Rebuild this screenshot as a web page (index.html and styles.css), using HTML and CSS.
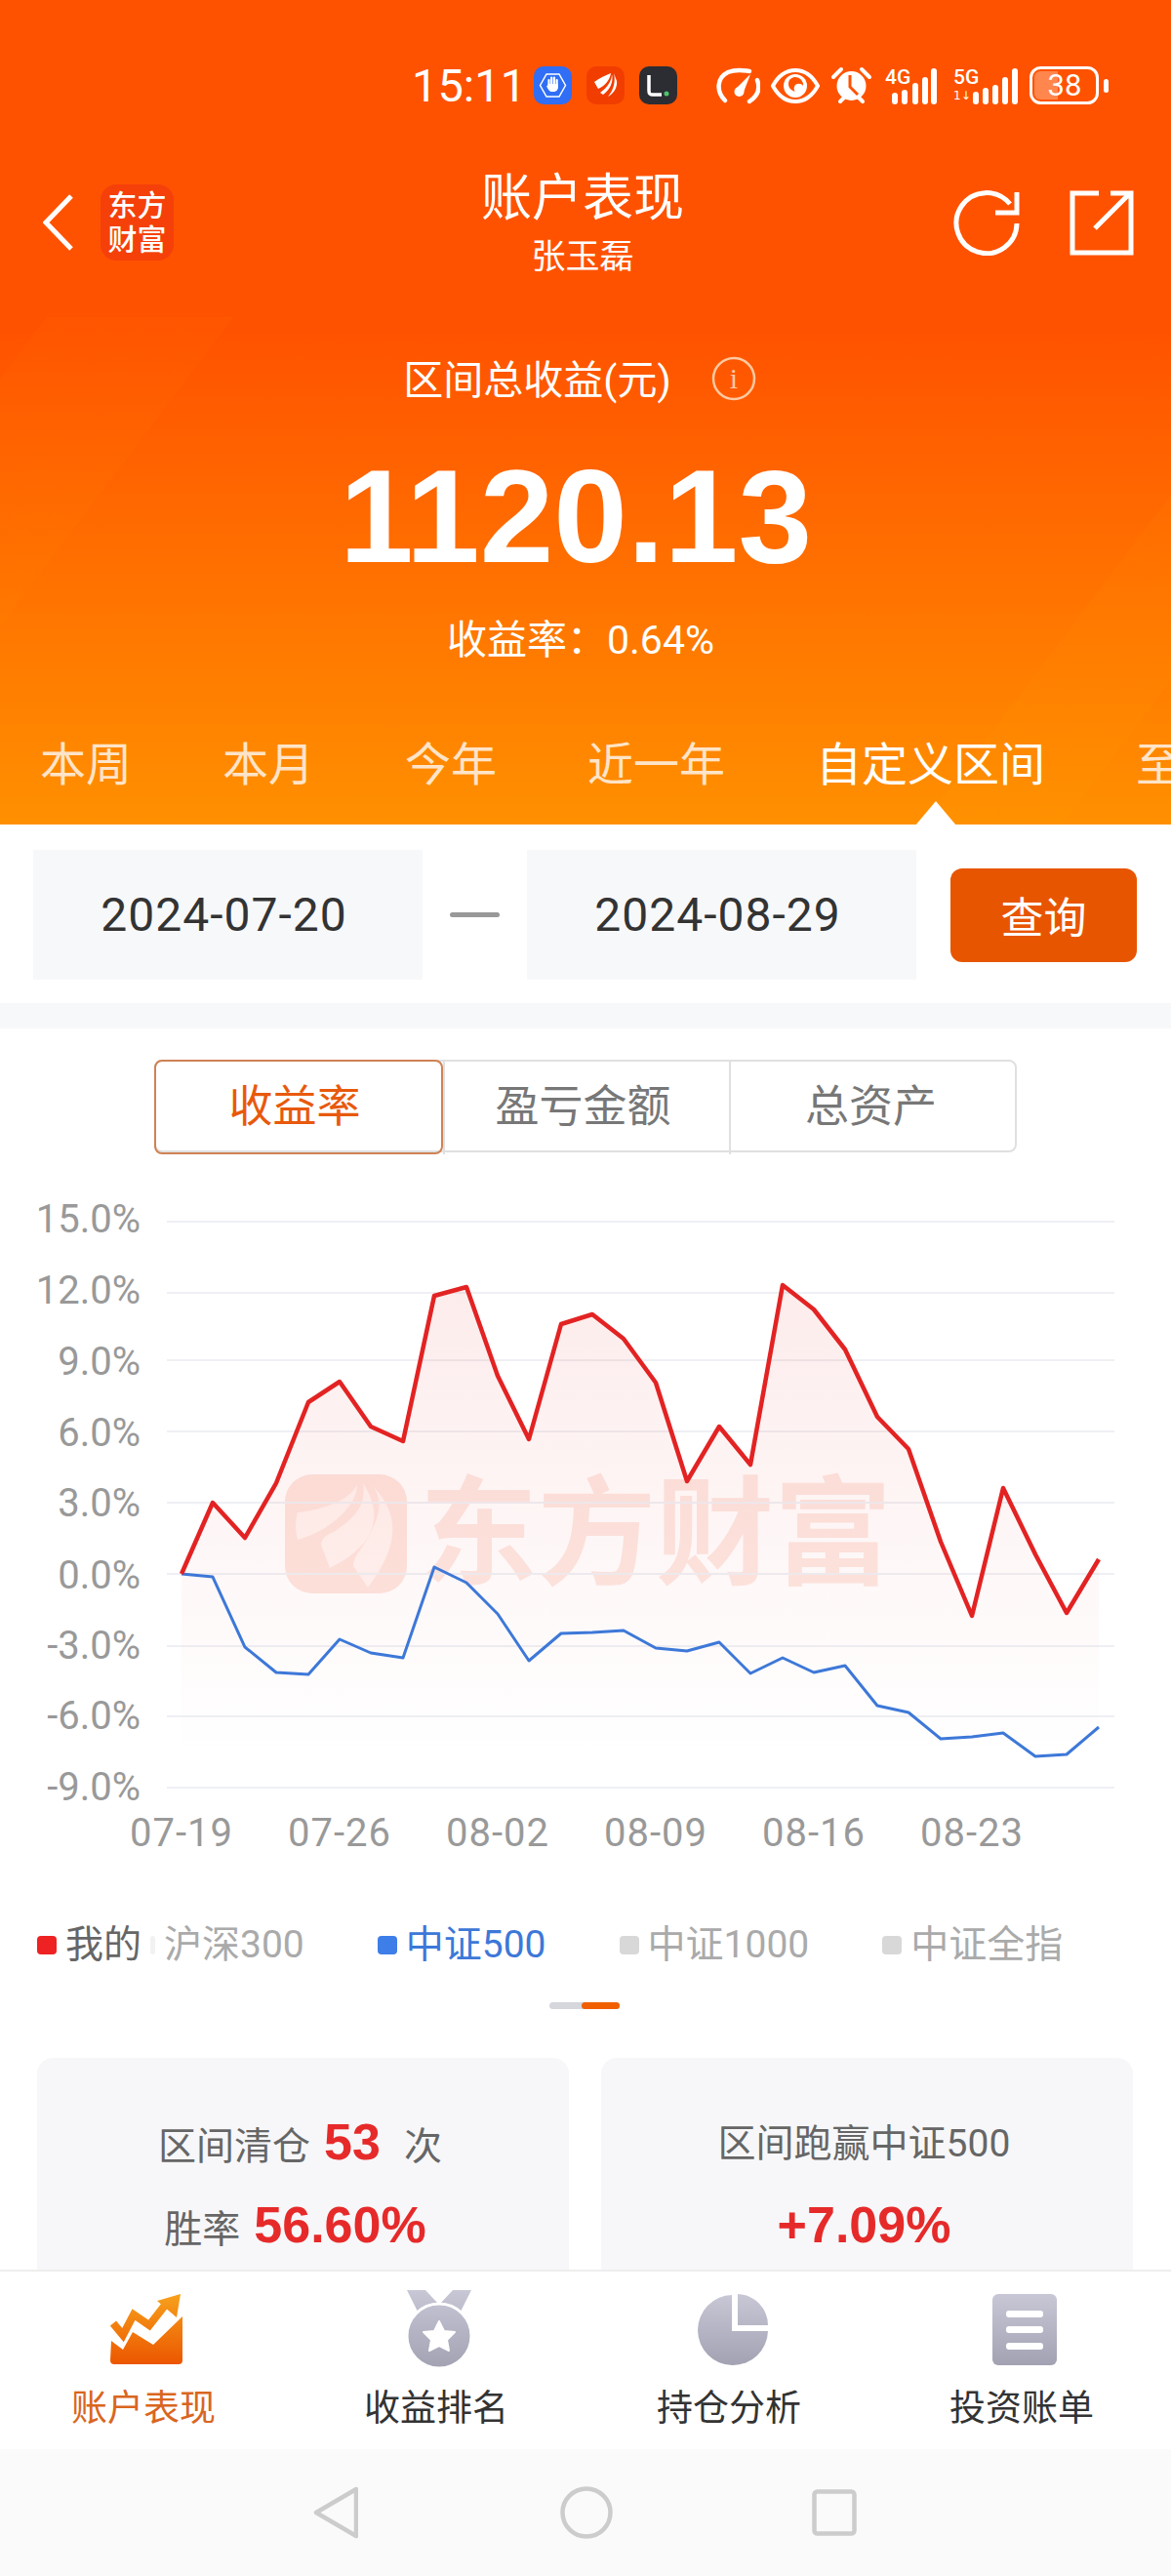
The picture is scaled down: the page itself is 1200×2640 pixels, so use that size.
FILE: index.html
```html
<!DOCTYPE html>
<html lang="zh-CN">
<head>
    <meta charset="UTF-8">
    <meta name="viewport" content="width=device-width, initial-scale=1.0">
    <title>账户表现</title>
    <link rel="stylesheet" href="styles.css">
</head>
<body>
    <header class="header">
        <!-- Status bar -->
        <div class="status-bar">
            <span class="status-time">15:11</span>
            <div class="status-apps">
                <svg width="39" height="39" viewBox="0 0 39 39"><rect width="39" height="39" rx="10" fill="#2f6ef5"/><path d="M6.500 19.500 13 8h13l6.500 11.500L26 31H13z" fill="none" stroke="#fff" stroke-width="1.500"/><path d="M15.500 19v-5M18.200 18v-6.500M21 18v-6.500M23.700 19v-5" fill="none" stroke="#fff" stroke-width="2.200" stroke-linecap="round"/><path d="M14.500 18H25v3c0 3-2 5-5 5h-1c-3 0-4-2-6-6l1.500-.5z" fill="#fff"/></svg>
                <svg width="39" height="39" viewBox="0 0 39 39"><rect width="39" height="39" rx="10" fill="#f23d00"/><path d="M25 7C20 9 13 12 8 16l4 7c7-3 12-9 13-16zM26 8c0 7-5 14-12 19l3 2c7-5 11-13 9-21zM28 7c2 8 0 17-6 24 6-3 10-10 9-16z" fill="#fff"/></svg>
                <svg width="39" height="39" viewBox="0 0 39 39"><rect width="39" height="39" rx="10" fill="#2b2d33"/><path d="M10 9v16c0 3 1 4 4 4h9" fill="none" stroke="#fff" stroke-width="3.500"/><circle cx="28" cy="28" r="2.500" fill="#4cc46a"/></svg>
            </div>
            <div class="status-sys">
                <svg width="45" height="39" viewBox="0 0 45 39"><g fill="none" stroke="#fff" stroke-width="4.500" stroke-linecap="round"><path d="M9 35C0 26 0 12 12 6c8-3 16-2 22-1"/><path d="M42 14c3 8 1 16-8 22"/></g><path d="M20 23 35 8 27 29z" fill="#fff"/><circle cx="23.500" cy="26" r="5" fill="#fff"/></svg>
                <svg width="50" height="39" viewBox="0 0 50 39"><path d="M2 20C8 9 16 4 25 4s17 5 23 16C42 31 34 36 25 36S8 31 2 20z" fill="none" stroke="#fff" stroke-width="4"/><circle cx="25" cy="20" r="12" fill="#fff"/><path d="M25 11a8 8 0 0 1 8 9c-2-3-8-3-9 1-1 3 1 5 1 5-3-1-7-3-7-8s4-7 7-7z" fill="#ff5200"/></svg>
                <svg width="43" height="39" viewBox="0 0 43 39"><path d="M3 11 11 3M40 11 32 3M10 36l4-4M33 36l-4-4" stroke="#fff" stroke-width="4" stroke-linecap="round"/><circle cx="21.500" cy="20" r="15" fill="#fff"/><path d="M20 9v12l8 8" fill="none" stroke="#ff5200" stroke-width="3"/></svg>
                <svg width="60" height="39" viewBox="0 0 60 39"><text class="net-label" x="2" y="18">4G</text><g fill="#fff"><rect x="9" y="27" width="6" height="12" rx="3"/><rect x="19" y="24" width="6" height="15" rx="3"/><rect x="30" y="17" width="6" height="22" rx="3"/><rect x="40" y="11" width="6" height="28" rx="3"/><rect x="49" y="2" width="6" height="37" rx="3"/></g></svg>
                <svg width="67" height="39" viewBox="0 0 67 39"><text class="net-label" x="1" y="18">5G</text><text class="net-small" x="1" y="34">1↓</text><g fill="#fff"><rect x="21" y="26" width="6" height="13" rx="3"/><rect x="31" y="22" width="6" height="17" rx="3"/><rect x="41" y="19" width="6" height="20" rx="3"/><rect x="51" y="11" width="6" height="28" rx="3"/><rect x="61" y="2" width="6" height="37" rx="3"/></g></svg>
                <svg width="85" height="39" viewBox="0 0 85 39"><rect x="2.500" y="1.500" width="68" height="36" rx="10" fill="none" stroke="#fff" stroke-width="3"/><path d="M12 5h18v29H12a6 6 0 0 1-6-6V11a6 6 0 0 1 6-6z" fill="#fff" opacity=".3"/><rect x="77" y="13" width="5" height="14" rx="2.500" fill="#fff"/><text class="battery-label" x="37" y="30">38</text></svg>
            </div>
        </div>

        <!-- Title row -->
        <div class="top-bar">
            <div class="top-left">
                <svg class="back-icon" width="32" height="58" viewBox="0 0 32 58"><path d="M29 2 3 29l26 27" fill="none" stroke="#fff" stroke-width="5"/></svg>
                <div class="app-logo">东方<br>财富</div>
            </div>
            <div class="top-title">
                <div class="page-title">账户表现</div>
                <div class="page-sub">张玉磊</div>
            </div>
            <div class="top-right">
                <svg width="68" height="68" viewBox="0 0 68 68"><path d="M58 15A31 31 0 1 0 65 35M65 3v21H43" fill="none" stroke="#fff" stroke-width="5"/></svg>
                <svg width="66" height="68" viewBox="0 0 66 68"><path d="M30 4H3v61h60V4H42M26 40 60 6" fill="none" stroke="#fff" stroke-width="5"/></svg>
            </div>
        </div>

        <!-- Summary -->
        <div class="summary">
            <div class="summary-label">
                <span class="summary-label-text">区间总收益(元)</span>
                <svg width="46" height="46" viewBox="0 0 46 46"><circle cx="23" cy="23" r="21" fill="none" stroke="#ffc9a0" stroke-width="2.500"/><text class="info-i" x="23" y="33">i</text></svg>
            </div>
            <div class="summary-value">1120.13</div>
            <div class="summary-rate">收益率：0.64%</div>
        </div>

        <!-- Period tabs -->
        <div class="period-tabs">
            <span class="period-tab">本周</span>
            <span class="period-tab">本月</span>
            <span class="period-tab">今年</span>
            <span class="period-tab">近一年</span>
            <span class="period-tab active">自定义区间</span>
            <span class="period-tab">至今</span>
        </div>
    </header>

    <!-- Date range -->
    <div class="date-row">
        <div class="date-box">2024-07-20</div>
        <div class="date-dash"></div>
        <div class="date-box">2024-08-29</div>
        <button class="query-btn">查询</button>
    </div>
    <div class="strip"></div>

    <main class="main">
        <div class="segments">
            <div class="segment active">收益率</div>
            <div class="segment">盈亏金额</div>
            <div class="segment">总资产</div>
        </div>

        <!-- viewBox uses the y of the whole page so the values are easy to compare -->
        <svg class="chart" width="1200" height="710" viewBox="0 1200 1200 710">
            <defs>
                <linearGradient id="areaFill" x1="0" y1="1317" x2="0" y2="1800" gradientUnits="userSpaceOnUse">
                    <stop offset="0" stop-color="#e62a2a" stop-opacity=".09"/>
                    <stop offset=".6" stop-color="#e62a2a" stop-opacity=".035"/>
                    <stop offset="1" stop-color="#e62a2a" stop-opacity="0"/>
                </linearGradient>
            </defs>

            <g class="watermark">
                <rect x="292" y="1511" width="125" height="122" rx="28"/>
                <path class="watermark-leaf" d="M305 1550c25-3 50-10 61-28 0 22-30 48-61 56q-4-14 0-28z"/>
                <path class="watermark-leaf" d="M372 1520c18 28 20 60-34 87l-9-24q0-8 13-13c26-17 33-30 30-50z"/>
                <path class="watermark-leaf" d="M381 1522c30 30 28 62-4 105l-15-22q0-8 8-18c20-30 24-50 11-65z"/>
                <text class="watermark-text" x="430" y="1614">东方财富</text>
            </g>

            <g class="grid">
                <line x1="171" x2="1142" y1="1252" y2="1252"/>
                <line x1="171" x2="1142" y1="1325" y2="1325"/>
                <line x1="171" x2="1142" y1="1394" y2="1394"/>
                <line x1="171" x2="1142" y1="1467" y2="1467"/>
                <line x1="171" x2="1142" y1="1540" y2="1540"/>
                <line x1="171" x2="1142" y1="1613" y2="1613"/>
                <line x1="171" x2="1142" y1="1687" y2="1687"/>
                <line x1="171" x2="1142" y1="1759" y2="1759"/>
                <line x1="171" x2="1142" y1="1832" y2="1832"/>
            </g>

            <g class="y-labels">
                <text x="144" y="1263">15.0%</text>
                <text x="144" y="1336">12.0%</text>
                <text x="144" y="1409">9.0%</text>
                <text x="144" y="1482">6.0%</text>
                <text x="144" y="1554">3.0%</text>
                <text x="144" y="1628">0.0%</text>
                <text x="144" y="1700">-3.0%</text>
                <text x="144" y="1772">-6.0%</text>
                <text x="144" y="1845">-9.0%</text>
            </g>
            <g class="x-labels">
                <text x="186" y="1892">07-19</text>
                <text x="348" y="1892">07-26</text>
                <text x="510" y="1892">08-02</text>
                <text x="672" y="1892">08-09</text>
                <text x="834" y="1892">08-16</text>
                <text x="996" y="1892">08-23</text>
            </g>

            <polygon fill="url(#areaFill)" points="186,1613 218,1540 251,1576 283,1520 316,1437 348,1416 380,1462 413,1477 445,1328 478,1319 510,1410 542,1475 575,1357 607,1347 639,1372 672,1417 704,1518 737,1462 769,1501 802,1317 834,1342 866,1383 899,1452 931,1485 964,1580 996,1656 1028,1525 1061,1593 1093,1653 1126,1598 1126,1832 186,1832"/>
            <polyline class="line-blue" points="186,1613 218,1616 251,1688 283,1714 316,1716 348,1680 380,1694 413,1699 445,1606 478,1622 510,1654 542,1702 575,1674 607,1673 639,1671 672,1689 704,1692 737,1683 769,1715 802,1699 834,1714 866,1707 899,1748 931,1755 964,1782 996,1780 1028,1776 1061,1800 1093,1798 1126,1770"/>
            <polyline class="line-red" points="186,1613 218,1540 251,1576 283,1520 316,1437 348,1416 380,1462 413,1477 445,1328 478,1319 510,1410 542,1475 575,1357 607,1347 639,1372 672,1417 704,1518 737,1462 769,1501 802,1317 834,1342 866,1383 899,1452 931,1485 964,1580 996,1656 1028,1525 1061,1593 1093,1653 1126,1598"/>
        </svg>

        <div class="legend">
            <div class="legend-item mine"><i class="dot dot-red"></i>我的</div>
            <div class="legend-item"><i class="dot dot-faint"></i>沪深300</div>
            <div class="legend-item blue"><i class="dot dot-blue"></i>中证500</div>
            <div class="legend-item"><i class="dot"></i>中证1000</div>
            <div class="legend-item"><i class="dot"></i>中证全指</div>
        </div>
        <div class="legend-scroll"><span></span></div>

        <div class="cards">
            <div class="card">
                <div class="card-row">区间清仓<b class="num first">53</b>次</div>
                <div class="card-row win">胜率<b class="num">56.60%</b></div>
            </div>
            <div class="card right">
                <div class="card-row">区间跑赢中证500</div>
                <div class="card-row"><b class="num">+7.09%</b></div>
            </div>
        </div>
    </main>

    <nav class="tab-bar">
        <div class="tab active">
            <div class="tab-icon">
                <svg width="74" height="72" viewBox="0 0 74 72">
                    <defs><linearGradient id="orangeIcon" x1="0" y1="0" x2="0" y2="72" gradientUnits="userSpaceOnUse"><stop offset="0" stop-color="#f7a11c"/><stop offset="1" stop-color="#ec5600"/></linearGradient></defs>
                    <path d="M1 48 13 57 23 39 44 52 74 23V68q0 4-4 4H4q-4 0-4-4z" fill="url(#orangeIcon)"/>
                    <path d="M3 30 13 42 24 21 40 32 58 9" fill="none" stroke="url(#orangeIcon)" stroke-width="8"/>
                    <path d="M48 7 72 0 68 24z" fill="url(#orangeIcon)"/>
                </svg>
            </div>
            <span>账户表现</span>
        </div>
        <div class="tab">
            <div class="tab-icon">
                <svg width="66" height="80" viewBox="0 0 66 80">
                    <defs><linearGradient id="grayMedal" x1="0" y1="0" x2="0" y2="80" gradientUnits="userSpaceOnUse"><stop offset="0" stop-color="#c8c7d6"/><stop offset="1" stop-color="#a2a2b3"/></linearGradient></defs>
                    <path d="M0 0H19L33 15 47 0H66L54 24H12z" fill="url(#grayMedal)"/>
                    <circle cx="33" cy="47" r="33" fill="url(#grayMedal)" stroke="#fff" stroke-width="3"/>
                    <path d="M33 32l5 10 11 1-8 8 2 11-10-5-10 5 2-11-8-8 11-1z" fill="#fff" stroke="#fff" stroke-width="2" stroke-linejoin="round"/>
                </svg>
            </div>
            <span>收益排名</span>
        </div>
        <div class="tab">
            <div class="tab-icon">
                <svg width="73" height="73" viewBox="0 0 73 73">
                    <defs><linearGradient id="grayPie" x1="0" y1="0" x2="0" y2="73" gradientUnits="userSpaceOnUse"><stop offset="0" stop-color="#c8c7d6"/><stop offset="1" stop-color="#a2a2b3"/></linearGradient></defs>
                    <path d="M42 0A32 32 0 0 1 73 32H42z" fill="url(#grayPie)"/>
                    <path d="M36 1A36 36 0 1 0 73 38H36z" fill="url(#grayPie)"/>
                </svg>
            </div>
            <span>持仓分析</span>
        </div>
        <div class="tab">
            <div class="tab-icon">
                <svg width="66" height="73" viewBox="0 0 66 73">
                    <defs><linearGradient id="grayDoc" x1="0" y1="0" x2="0" y2="73" gradientUnits="userSpaceOnUse"><stop offset="0" stop-color="#c8c7d6"/><stop offset="1" stop-color="#a2a2b3"/></linearGradient></defs>
                    <rect width="66" height="73" rx="6" fill="url(#grayDoc)"/>
                    <rect x="14" y="17" width="38" height="7" rx="3" fill="#fff"/>
                    <rect x="14" y="33" width="38" height="7" rx="3" fill="#fff"/>
                    <rect x="14" y="50" width="38" height="7" rx="3" fill="#fff"/>
                </svg>
            </div>
            <span>投资账单</span>
        </div>
    </nav>

    <div class="sys-nav">
        <svg width="46" height="54" viewBox="0 0 46 54"><path d="M44 3v48L3 27z" fill="none" stroke="#ccc" stroke-width="4.500" stroke-linejoin="round"/></svg>
        <svg width="54" height="54" viewBox="0 0 54 54"><circle cx="27" cy="27" r="24.500" fill="none" stroke="#ccc" stroke-width="4.500"/></svg>
        <svg class="sys-square" width="46" height="48" viewBox="0 0 46 48"><rect x="2.500" y="2.500" width="41" height="43" rx="3" fill="none" stroke="#ccc" stroke-width="4.500"/></svg>
    </div>
</body>
</html>
```

FILE: styles.css
```css
* {
    box-sizing: border-box;
}
html, body {
    margin: 0;
    padding: 0;
}
body {
    width: 1200px;
    height: 2640px;
    display: flex;
    flex-direction: column;
    overflow: hidden;
    background-color: #fff;
    font-family: Roboto, "Noto Sans CJK SC", sans-serif;
    color: #333;
}
svg {
    display: block;
    flex: none;
}

/* Header */
.header {
    height: 845px;
    flex: none;
    overflow: hidden;
    background-color: #ff5200;
    background-image:
        linear-gradient(127deg, transparent 3%, rgba(255, 170, 0, 0.04) 3%, rgba(255, 170, 0, 0.04) 15%, transparent 15%),
        linear-gradient(127deg, transparent 84%, rgba(255, 170, 0, 0.06) 84%, rgba(255, 170, 0, 0.06) 93%, transparent 93%),
        linear-gradient(to bottom, #ff5200 0, #ff5200 40%, #ff9000 100%);
    background-size: 100% 520px, 100% 520px, 100% 100%;
    background-position: bottom, bottom, top;
    background-repeat: no-repeat;
    color: #fff;
}
.status-bar {
    display: flex;
    align-items: center;
    height: 39px;
    margin-top: 68px;
    padding-left: 422px;
}
.status-time {
    width: 125px;
    font-size: 47px;
    line-height: 39px;
}
.status-apps {
    display: flex;
    gap: 15px;
}
.status-sys {
    display: flex;
    gap: 11px;
    margin-left: 40px;
}
.net-label {
    font-family: Roboto, sans-serif;
    font-size: 21px;
    font-weight: 500;
    fill: #fff;
}
.net-small {
    font-family: "DejaVu Sans", sans-serif;
    font-size: 12px;
    fill: #fff;
}
.battery-label {
    font-family: Roboto, sans-serif;
    font-size: 31px;
    text-anchor: middle;
    fill: #fff;
}
.top-bar {
    display: grid;
    grid-template-columns: 1fr 300px 1fr;
    align-items: center;
    height: 120px;
    margin-top: 60px;
}
.top-left {
    display: flex;
    align-items: center;
    gap: 27px;
    padding-left: 44px;
}
.app-logo {
    width: 75px;
    height: 78px;
    padding-top: 4px;
    border-radius: 16px;
    background-color: #f5400a;
    font-size: 30px;
    font-weight: 500;
    line-height: 35px;
    text-align: center;
}
.top-title {
    padding-top: 2px;
    padding-right: 6px;
    text-align: center;
}
.page-title {
    font-size: 52px;
    line-height: 70px;
}
.page-sub {
    font-size: 35px;
    line-height: 50px;
}
.top-right {
    display: flex;
    justify-content: flex-end;
    gap: 51px;
    padding-right: 38px;
}
.summary {
    margin-top: 78px;
    text-align: center;
}
.summary-label {
    display: flex;
    justify-content: center;
    align-items: center;
    gap: 41px;
    height: 46px;
    padding-right: 12px;
    font-size: 41px;
}
.summary-label-text {
    margin-top: -4px;
}
.info-i {
    font-family: "Liberation Serif", serif;
    font-size: 30px;
    text-anchor: middle;
    fill: #ffc9a0;
}
.summary-value {
    margin-top: 58px;
    padding-right: 20px;
    font-family: "Liberation Sans", sans-serif;
    font-size: 136px;
    font-weight: 700;
    line-height: 120px;
}
.summary-rate {
    margin-top: 42px;
    padding-right: 10px;
    font-size: 41px;
    line-height: 50px;
}
.period-tabs {
    display: flex;
    gap: 93px;
    margin-top: 71px;
    padding-left: 41px;
    font-size: 47px;
    line-height: 64px;
    white-space: nowrap;
}
.period-tab {
    color: #ffe4c8;
}
.period-tab.active {
    position: relative;
    color: #fff;
}
/* little white arrow under the selected period */
.period-tab.active::after {
    content: '';
    position: absolute;
    left: 102px;
    bottom: -30px;
    border-left: 21px solid transparent;
    border-right: 21px solid transparent;
    border-bottom: 25px solid #fff;
}

/* Date range */
.date-row {
    display: flex;
    align-items: center;
    flex: none;
    height: 183px;
    padding: 26px 0 24px 34px;
}
.date-box {
    width: 399px;
    height: 133px;
    padding-right: 8px;
    background-color: #f7f8fa;
    font-size: 48px;
    letter-spacing: 1px;
    line-height: 133px;
    text-align: center;
    color: #333;
}
.date-dash {
    width: 51px;
    height: 5px;
    margin: 0 28px;
    border-radius: 3px;
    background-color: #999;
}
.query-btn {
    width: 191px;
    height: 96px;
    margin-left: 35px;
    padding: 0;
    border: none;
    border-radius: 12px;
    background-color: #e85500;
    font-family: inherit;
    font-size: 44px;
    color: #fff;
}
.strip {
    flex: none;
    height: 26px;
    background-color: #f7f8fa;
}

/* Main content */
.main {
    flex: 1;
    min-height: 0;
    overflow: hidden;
}
.segments {
    display: grid;
    grid-template-columns: 294px 293px 297px;
    width: 884px;
    height: 95px;
    margin: 32px 0 0 158px;
    border: 2px solid #e0e0e0;
    border-radius: 8px;
}
.segment {
    margin: -2px 0;
    padding: 3px 8px 0 0;
    border-left: 2px solid #e0e0e0;
    font-size: 45px;
    line-height: 92px;
    text-align: center;
    color: #777;
}
.segment:first-child {
    border-left: none;
}
.segment.active {
    margin-left: -2px;
    padding-top: 1px;
    border: 2px solid #cf8254;
    border-radius: 8px;
    line-height: 92px;
    color: #e8590c;
}
.chart {
    margin-top: 19px;
}
.grid line {
    stroke: #eef0f4;
    stroke-width: 2;
}
.y-labels text {
    font-size: 40px;
    text-anchor: end;
    fill: #999;
}
.x-labels text {
    font-size: 40px;
    letter-spacing: 1px;
    text-anchor: middle;
    fill: #999;
}
.watermark rect {
    fill: #fde5de;
}
.watermark-leaf {
    fill: #fff4f1;
}
.watermark-text {
    font-family: "Noto Sans CJK SC", sans-serif;
    font-size: 121px;
    font-weight: 700;
    fill: #fde7e1;
}
.line-red {
    fill: none;
    stroke: #e32323;
    stroke-width: 4.5;
    stroke-linejoin: round;
}
.line-blue {
    fill: none;
    stroke: #3d78d8;
    stroke-width: 3;
    stroke-linejoin: round;
}

/* Legend */
.legend {
    display: flex;
    gap: 75px;
    margin-top: 58px;
    padding-left: 38px;
    font-size: 39px;
    line-height: 50px;
    color: #aaa;
    white-space: nowrap;
}
.legend-item {
    display: flex;
    align-items: center;
    gap: 9px;
}
.legend-item.mine {
    margin-right: -66px;
    color: #666;
}
.legend-item.blue {
    color: #3d78d8;
}
.dot {
    width: 20px;
    height: 19px;
    border-radius: 4px;
    background-color: #d8d8d8;
}
.dot-red {
    background-color: #ee2222;
}
.dot-blue {
    background-color: #3d7ee8;
}
.dot-faint {
    width: 5px;
    background-color: #f2f2f2;
}
.legend-scroll {
    width: 72px;
    height: 7px;
    margin: 34px 0 0 563px;
    border-radius: 4px;
    background-color: #d5d7dd;
}
.legend-scroll span {
    display: block;
    width: 39px;
    height: 7px;
    margin-left: 33px;
    border-radius: 4px;
    background-color: #f06000;
}

/* Cards */
.cards {
    display: grid;
    grid-template-columns: 545px 545px;
    gap: 33px;
    margin-top: 50px;
    padding-left: 38px;
}
.card {
    height: 260px;
    padding-top: 56px;
    border-radius: 16px;
    background-color: #f7f7f9;
    text-align: center;
    font-size: 39px;
    color: #666;
}
.card-row {
    padding-right: 6px;
    line-height: 60px;
}
.card-row + .card-row {
    margin-top: 20px;
}
.card-row.win {
    padding-right: 16px;
}
.num {
    margin-left: 14px;
    font-family: "Liberation Sans", sans-serif;
    font-size: 52px;
    font-weight: 700;
    color: #e62a2a;
}
.num.first {
    margin-right: 24px;
}
.card.right .card-row:first-child {
    margin-top: 2px;
}
.card.right .card-row + .card-row {
    margin-top: 23px;
}
.card.right .num {
    margin-left: 0;
}

/* Bottom tabs */
.tab-bar {
    display: grid;
    grid-template-columns: repeat(4, 1fr);
    flex: none;
    height: 184px;
    border-top: 2px solid #eeeeee;
    background-color: #fff;
}
.tab {
    text-align: center;
    font-size: 37px;
    line-height: 50px;
    color: #333;
}
.tab.active {
    color: #d9661e;
}
.tab-icon {
    display: flex;
    justify-content: center;
    align-items: center;
    height: 80px;
    margin: 19px 0 17px;
}
.tab span {
    display: block;
    padding-right: 6px;
}
.sys-nav {
    display: grid;
    grid-template-columns: 46px 54px 46px;
    gap: 207px;
    align-items: center;
    flex: none;
    height: 130px;
    padding-left: 321px;
    background-color: #fafafa;
}
.sys-square {
    margin-left: -3px;
}
```
